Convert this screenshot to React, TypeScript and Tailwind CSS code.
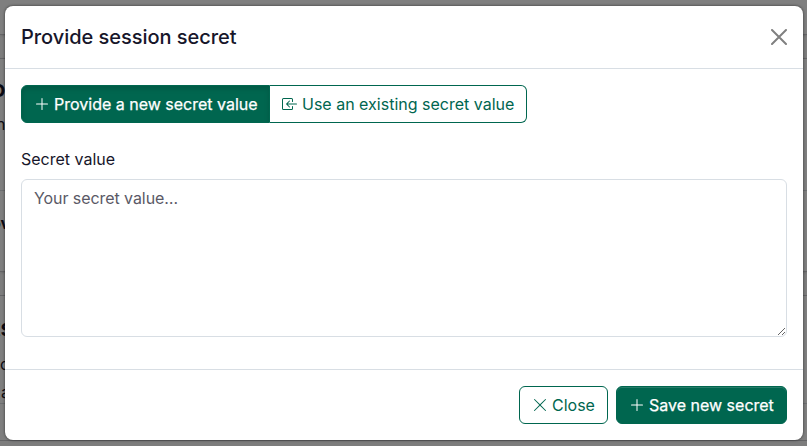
import { BsBoxArrowInLeft, BsPlusLg, BsXLg } from "react-icons/bs";

function Fragment({ className, children }: { className: string; children: string }) {
  return (
    <span className={`absolute flex h-8 items-center whitespace-nowrap text-[#17162a] ${className}`}>
      {children}
    </span>
  );
}

function PageBehind() {
  return (
    <div aria-hidden className="absolute inset-0 bg-[#fbfbfb]">
      <div className="flex h-full flex-col">
        <div className="h-[35px] shrink-0 border-b border-[#c8c8cc] bg-white shadow-sm" />
        <div className="mt-[23px] h-[214px] shrink-0 border-y border-[#c8c8cc] bg-white shadow-sm">
          <div className="h-[132px] border-b border-[#d9dce0]" />
        </div>
        <div className="mt-[23px] h-[146px] shrink-0 border-y border-[#c8c8cc] bg-white">
          <div className="h-[108px] border-b border-[#d9dce0]" />
        </div>
      </div>
      <Fragment className="left-[-9px] top-[73px] text-2xl font-semibold">o</Fragment>
      <Fragment className="left-[-4px] top-[108px] text-base">n</Fragment>
      <Fragment className="left-[-9px] top-[207px] text-base font-bold">ov</Fragment>
      <Fragment className="left-[-8px] top-[312px] text-2xl font-semibold">ts</Fragment>
      <Fragment className="left-0 top-[348px] text-base">c</Fragment>
      <Fragment className="left-px top-[376px] text-base">a</Fragment>
    </div>
  );
}

export default function App() {
  return (
    <div className="relative h-[446px] w-[807px] overflow-hidden font-[Inter,sans-serif] text-base text-[#17162a]">
      <PageBehind />
      <div className="absolute inset-0 bg-black/50 pl-[5px] pt-[6px]">
        <section className="flex h-[434px] w-[798px] flex-col rounded-lg bg-white shadow-[0_0_3px_rgba(0,0,0,0.6)]">
          <header className="flex h-[63px] shrink-0 items-center justify-between border-b border-[#d8dee4] pl-4 pr-4">
            <h1 className="text-xl font-medium leading-[30px] tracking-[-0.04px]">Provide session secret</h1>
            <button aria-label="Close" className="text-[#808080]">
              <svg viewBox="0 0 16 16" className="size-4" fill="none" stroke="currentColor" strokeWidth="2" strokeLinecap="round">
                <path d="M1 1l14 14M15 1L1 15" />
              </svg>
            </button>
          </header>
          <div className="flex grow flex-col px-4 pt-4">
            <div className="flex h-[38px]">
              <button className="flex w-[249px] items-center rounded-l-md border border-[#00664f] bg-[#00664f] pl-3 text-white shadow-[inset_0_3px_5px_rgba(0,0,0,0.125)]">
                <BsPlusLg className="mr-1 size-4" />
                <span className="[-webkit-text-stroke:0.25px_white]">Provide a new secret value</span>
              </button>
              <button className="flex w-[257px] items-center rounded-r-md border border-l-0 border-[#00664f] bg-white pl-3 text-[#00664f]">
                <BsBoxArrowInLeft className="mr-1 size-4" />
                Use an existing secret value
              </button>
            </div>
            <label htmlFor="secret" className="mt-6 h-8 leading-6">Secret value</label>
            <textarea
              id="secret"
              placeholder="Your secret value…"
              className="h-[158px] w-full resize-y rounded-md border border-[#d8dee4] px-3 py-1.5 leading-6 tracking-[-0.07px] placeholder:text-[#5a5966]"
            />
          </div>
          <footer className="flex h-[71px] shrink-0 justify-end gap-2 border-t border-[#d8dee4] px-4 pt-4">
            <button className="flex h-[38px] w-[89px] items-center rounded-md border border-[#00664f] pl-3 text-[#00664f]">
              <BsXLg className="mr-1 size-4" />
              Close
            </button>
            <button className="flex h-[38px] w-[171px] items-center rounded-md border border-[#00664f] bg-[#00664f] pl-3 text-white shadow-[inset_0_1px_0_rgba(255,255,255,0.15)]">
              <BsPlusLg className="mr-1 size-4" />
              <span className="[-webkit-text-stroke:0.25px_white]">Save new secret</span>
            </button>
          </footer>
        </section>
      </div>
    </div>
  );
}
